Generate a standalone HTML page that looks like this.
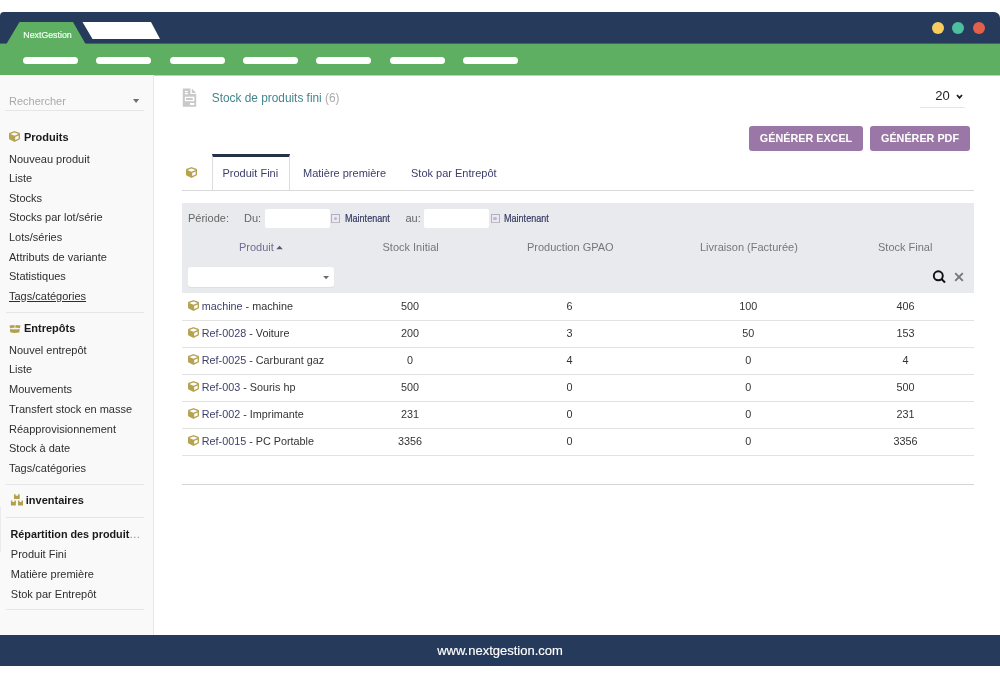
<!DOCTYPE html>
<html>
<head>
<meta charset="utf-8">
<style>
*{margin:0;padding:0;box-sizing:border-box}
html,body{width:1000px;height:679px;overflow:hidden;background:#fff}
body{font-family:"Liberation Sans",sans-serif;position:relative;color:#333}
.a{position:absolute;white-space:nowrap;line-height:1}
#nav{position:absolute;left:0;top:12px;width:1000px;height:31px;background:#263a5b;border-radius:4px 6px 0 0}
#green{position:absolute;left:0;top:43px;width:1000px;height:32px;background:#5eaf62}
.pill{position:absolute;top:57px;width:55px;height:7px;border-radius:3.5px;background:#fff}
.dot{position:absolute;top:22px;width:12px;height:12px;border-radius:50%}
#side{position:absolute;left:0;top:75px;width:154px;height:560px;background:#f9f9f9;border-right:1px solid #e8e8e8}
.si{position:absolute;font-size:11px;line-height:1;color:#2e2e2e;white-space:nowrap}
.sep{position:absolute;left:6px;width:138px;height:1px;background:#e6e6e6}
.hd{font-weight:bold;color:#1a1a1a}
#foot{position:absolute;left:0;top:635px;width:1000px;height:31px;background:#263a5b;color:#fff;-webkit-text-stroke:0.15px #fff;font-size:13px;text-align:center;line-height:31px}
.btn{position:absolute;top:126px;height:25px;background:#9b77a7;border-radius:3px;color:#fff;font-weight:bold;font-size:10.8px;text-align:center;line-height:25px}
.tab{position:absolute;font-size:11px;line-height:1;white-space:nowrap;color:#3c3e6a}
.th{position:absolute;font-size:11px;line-height:1;white-space:nowrap;color:#777}
.td{font-size:10.8px;color:#333}
.c{width:100px;text-align:center}
.hl{position:absolute;left:182px;width:792px;height:1px;background:#e2e2e2}
.inp{position:absolute;top:209px;height:19px;background:#fff;border-radius:2px}
.chk{position:absolute;top:214px;width:9px;height:9px;border:1px solid #aeb0c2;border-bottom-color:#bdbdc4;background:#ece8f3}
.chk:after{content:"";position:absolute;left:1.7px;top:1.7px;width:3.6px;height:3.6px;border-radius:50%;background:#cfadd0}
.mt{position:absolute;top:214px;font-size:10px;transform:scaleX(0.905);transform-origin:0 0;-webkit-text-stroke:0.2px #363a62;line-height:1;color:#363a62;white-space:nowrap}
</style>
</head>
<body>
<div id="wrap" style="position:absolute;left:0;top:0;width:1000px;height:679px;will-change:transform">
<div id="nav"></div>
<div id="green"></div>
<div style="position:absolute;left:0;top:43px;width:1000px;height:1px;background:#3d6a5e"></div>
<div style="position:absolute;left:0;top:75px;width:1000px;height:1px;background:#b0d8b1"></div>
<svg style="position:absolute;left:0;top:0" width="200" height="45">
  <polygon points="6.4,44 19.5,22 73,22 85.6,44" fill="#5eaf62"/>
  <polygon points="82.5,22 151,22 160,39 92.5,39" fill="#fff"/>
</svg>

<div class="a" style="left:23.3px;top:30.6px;font-size:8.8px;color:#effff0;-webkit-text-stroke:0.2px #effff0">NextGestion</div>
<div class="pill" style="left:23px"></div><div class="pill" style="left:96px"></div><div class="pill" style="left:170px"></div><div class="pill" style="left:243px"></div><div class="pill" style="left:316px"></div><div class="pill" style="left:390px"></div><div class="pill" style="left:463px"></div>
<div class="dot" style="left:932px;background:#f8cd5f"></div>
<div class="dot" style="left:952px;background:#4bbf9e"></div>
<div class="dot" style="left:973px;background:#e3604b"></div>

<div id="side"></div>
<div class="sep" style="top:110px;left:5px;width:139px"></div>
<svg width="7" height="5" style="position:absolute;left:133px;top:99px"><polygon points="0,0 6.2,0 3.1,4.1" fill="#6e6e6e"/></svg>
<svg width="11" height="11" viewBox="0 0 512 512" style="position:absolute;left:9px;top:131px"><path fill="#b5a352" d="M239.1 6.3l-208 78c-18.7 7-31.1 25-31.1 45v225.1c0 18.2 10.3 34.8 26.5 42.9l208 104c13.5 6.8 29.4 6.8 42.9 0l208-104c16.3-8.1 26.5-24.8 26.5-42.9V129.3c0-20-12.4-37.9-31.1-44.9l-208-78C262 2.2 250 2.2 239.1 6.3zM256 68.4l192 72v1.1l-192 78-192-78v-1.1l192-72zm32 356V275.5l160-65v133.9l-160 80z"/></svg>
<svg width="12" height="10" viewBox="0 0 12 10" style="position:absolute;left:9px;top:324px"><path fill="#b3a04e" d="M0.4 1.5 L5.3 0.9 L5.9 3.6 L1.2 4.2Z M6.1 3.6 L6.7 0.9 L11.6 1.5 L10.8 4.2Z M1.1 4.9 L5.6 5.5 L6 4.6 L6.4 5.5 L10.5 4.9 V8.2 Q6 9.6 1.1 8.2Z"/></svg>
<svg width="14" height="14" viewBox="0 0 14 14" style="position:absolute;left:10px;top:493px"><path fill="#b3a04e" d="M4 1.3h1.6v1.4h2.5v-1.4h1.6v4.6h-5.7Z M0.9 7.6h1.5v1.4h2v-1.4h1.5v5h-5Z M8 7.6h1.5v1.4h2v-1.4h1.5v5h-5Z"/></svg>
<div class="si " style="left:9px;top:96px;color:#a9a9a9">Rechercher</div><div class="si hd" style="left:24px;top:132px;">Produits</div><div class="si " style="left:9px;top:154px;">Nouveau produit</div><div class="si " style="left:9px;top:173px;">Liste</div><div class="si " style="left:9px;top:193px;">Stocks</div><div class="si " style="left:9px;top:212px;">Stocks par lot/série</div><div class="si " style="left:9px;top:232px;">Lots/séries</div><div class="si " style="left:9px;top:252px;">Attributs de variante</div><div class="si " style="left:9px;top:271px;">Statistiques</div><div class="si " style="left:9px;top:291px;"><u>Tags/catégories</u></div><div class="si hd" style="left:24px;top:323px;">Entrepôts</div><div class="si " style="left:9px;top:345px;">Nouvel entrepôt</div><div class="si " style="left:9px;top:364px;">Liste</div><div class="si " style="left:9px;top:384px;">Mouvements</div><div class="si " style="left:9px;top:404px;">Transfert stock en masse</div><div class="si " style="left:9px;top:424px;">Réapprovisionnement</div><div class="si " style="left:9px;top:443px;">Stock à date</div><div class="si " style="left:9px;top:463px;">Tags/catégories</div><div class="si hd" style="left:25.8px;top:495px;">inventaires</div><div class="si hd" style="left:10.5px;top:529px;font-size:10.8px">Répartition des produit<span style="font-weight:normal;color:#8a8a8a;font-size:11px">…</span></div><div class="si " style="left:10.8px;top:549px;">Produit Fini</div><div class="si " style="left:10.8px;top:569px;">Matière première</div><div class="si " style="left:10.8px;top:589px;">Stok par Entrepôt</div>
<div class="sep" style="top:312px"></div><div class="sep" style="top:484px"></div><div class="sep" style="top:517px"></div><div class="sep" style="top:609px"></div>
<div style="position:absolute;left:0;top:507px;width:1px;height:45px;background:#ebebeb"></div>

<!-- title -->
<svg width="15" height="19" viewBox="0 0 15 19" style="position:absolute;left:182px;top:88px">
 <path fill="#c9c9c9" d="M0.75 0.6H8.4V6.1H14.2V18.7H0.75Z"/>
 <path fill="#c9c9c9" d="M9.8 0.6L14.2 5H9.8Z"/>
 <rect x="2.9" y="2.9" width="3" height="1.3" fill="#fff"/>
 <rect x="2.9" y="5" width="3" height="1.3" fill="#fff"/>
 <rect x="2.9" y="8.7" width="9.4" height="4.5" fill="#fff"/>
 <rect x="4" y="10" width="6.8" height="2" fill="#c9c9c9"/>
 <rect x="8" y="15" width="4.3" height="2" fill="#fff"/>
</svg>
<div class="a" style="left:211.8px;top:93px;font-size:11.85px;color:#42868e">Stock de produits fini <span style="color:#aaa">(6)</span></div>
<div class="a" style="left:935.2px;top:89px;font-size:13px;color:#222">20</div>
<svg width="8" height="6" style="position:absolute;left:955.5px;top:93.5px"><polyline points="1,1 3.5,3.8 6,1" fill="none" stroke="#222" stroke-width="1.8"/></svg>
<div style="position:absolute;left:920px;top:107px;width:45px;height:1px;background:#e6e6e6"></div>

<div class="btn" style="left:749px;width:114px">GÉNÉRER EXCEL</div>
<div class="btn" style="left:870px;width:100px">GÉNÉRER PDF</div>

<!-- tabs -->
<svg width="11" height="11" viewBox="0 0 512 512" style="position:absolute;left:186px;top:166.5px"><path fill="#b5a352" d="M239.1 6.3l-208 78c-18.7 7-31.1 25-31.1 45v225.1c0 18.2 10.3 34.8 26.5 42.9l208 104c13.5 6.8 29.4 6.8 42.9 0l208-104c16.3-8.1 26.5-24.8 26.5-42.9V129.3c0-20-12.4-37.9-31.1-44.9l-208-78C262 2.2 250 2.2 239.1 6.3zM256 68.4l192 72v1.1l-192 78-192-78v-1.1l192-72zm32 356V275.5l160-65v133.9l-160 80z"/></svg>
<div style="position:absolute;left:212px;top:154px;width:78px;height:37px;border:1px solid #dcdcdc;border-top:3px solid #253146;border-bottom:none;background:#fff"></div>
<div style="position:absolute;left:182px;top:190px;width:792px;height:1px;background:#d9d9d9"></div>
<div class="tab" style="left:222.5px;top:168px">Produit Fini</div>
<div class="tab" style="left:303px;top:168px">Matière première</div>
<div class="tab" style="left:411px;top:168px">Stok par Entrepôt</div>

<!-- filter -->
<div style="position:absolute;left:182px;top:203px;width:792px;height:90px;background:#e9eaee"></div>
<div class="th" style="left:188px;top:213px;color:#666">Période:</div>
<div class="th" style="left:244px;top:213px;color:#666">Du:</div>
<div class="inp" style="left:265px;width:65px"></div>
<div class="chk" style="left:331px"></div>
<div class="mt" style="left:344.5px">Maintenant</div>
<div class="th" style="left:405.5px;top:213px;color:#666">au:</div>
<div class="inp" style="left:424px;width:65px"></div>
<div class="chk" style="left:490.5px"></div>
<div class="mt" style="left:503.5px">Maintenant</div>

<div class="th" style="left:239px;top:242px;color:#6c6e94">Produit</div>
<svg width="8" height="5" style="position:absolute;left:276px;top:244.5px"><polygon points="0.3,4.3 3.5,0.7 6.8,4.3" fill="#58596c"/></svg>
<div class="th" style="left:382.5px;top:242px">Stock Initial</div>
<div class="th" style="left:527px;top:242px">Production GPAO</div>
<div class="th" style="left:700px;top:242px">Livraison (Facturée)</div>
<div class="th" style="left:878px;top:242px">Stock Final</div>

<div style="position:absolute;left:188px;top:267px;width:146px;height:20px;background:#fff;border-radius:3px;box-shadow:0 1px 0 #dedee2"></div>
<svg width="7" height="4" style="position:absolute;left:323px;top:276px"><polygon points="0.2,0 6,0 3.1,3.3" fill="#6a6a6a"/></svg>
<svg width="14" height="14" style="position:absolute;left:932px;top:270px"><circle cx="6.3" cy="5.8" r="4.5" fill="none" stroke="#111" stroke-width="1.9"/><line x1="9.5" y1="9" x2="13" y2="12.5" stroke="#111" stroke-width="2"/></svg>
<svg width="10" height="10" style="position:absolute;left:954px;top:272px"><path d="M1.2 1.2L8.8 8.8M8.8 1.2L1.2 8.8" stroke="#777" stroke-width="1.9"/></svg>

<svg width="11" height="11" viewBox="0 0 512 512" style="position:absolute;left:188px;top:300px"><path fill="#b5a352" d="M239.1 6.3l-208 78c-18.7 7-31.1 25-31.1 45v225.1c0 18.2 10.3 34.8 26.5 42.9l208 104c13.5 6.8 29.4 6.8 42.9 0l208-104c16.3-8.1 26.5-24.8 26.5-42.9V129.3c0-20-12.4-37.9-31.1-44.9l-208-78C262 2.2 250 2.2 239.1 6.3zM256 68.4l192 72v1.1l-192 78-192-78v-1.1l192-72zm32 356V275.5l160-65v133.9l-160 80z"/></svg><div class="a td" style="left:201.8px;top:301px"><span style="color:#3e3f6a">machine</span> - machine</div><div class="a td c" style="left:360px;top:301px">500</div><div class="a td c" style="left:519.5px;top:301px">6</div><div class="a td c" style="left:698.3px;top:301px">100</div><div class="a td c" style="left:855.5px;top:301px">406</div><div class="hl" style="top:320px"></div><svg width="11" height="11" viewBox="0 0 512 512" style="position:absolute;left:188px;top:327px"><path fill="#b5a352" d="M239.1 6.3l-208 78c-18.7 7-31.1 25-31.1 45v225.1c0 18.2 10.3 34.8 26.5 42.9l208 104c13.5 6.8 29.4 6.8 42.9 0l208-104c16.3-8.1 26.5-24.8 26.5-42.9V129.3c0-20-12.4-37.9-31.1-44.9l-208-78C262 2.2 250 2.2 239.1 6.3zM256 68.4l192 72v1.1l-192 78-192-78v-1.1l192-72zm32 356V275.5l160-65v133.9l-160 80z"/></svg><div class="a td" style="left:201.8px;top:328px"><span style="color:#3e3f6a">Ref-0028</span> - Voiture</div><div class="a td c" style="left:360px;top:328px">200</div><div class="a td c" style="left:519.5px;top:328px">3</div><div class="a td c" style="left:698.3px;top:328px">50</div><div class="a td c" style="left:855.5px;top:328px">153</div><div class="hl" style="top:347px"></div><svg width="11" height="11" viewBox="0 0 512 512" style="position:absolute;left:188px;top:354px"><path fill="#b5a352" d="M239.1 6.3l-208 78c-18.7 7-31.1 25-31.1 45v225.1c0 18.2 10.3 34.8 26.5 42.9l208 104c13.5 6.8 29.4 6.8 42.9 0l208-104c16.3-8.1 26.5-24.8 26.5-42.9V129.3c0-20-12.4-37.9-31.1-44.9l-208-78C262 2.2 250 2.2 239.1 6.3zM256 68.4l192 72v1.1l-192 78-192-78v-1.1l192-72zm32 356V275.5l160-65v133.9l-160 80z"/></svg><div class="a td" style="left:201.8px;top:355px"><span style="color:#3e3f6a">Ref-0025</span> - Carburant gaz</div><div class="a td c" style="left:360px;top:355px">0</div><div class="a td c" style="left:519.5px;top:355px">4</div><div class="a td c" style="left:698.3px;top:355px">0</div><div class="a td c" style="left:855.5px;top:355px">4</div><div class="hl" style="top:374px"></div><svg width="11" height="11" viewBox="0 0 512 512" style="position:absolute;left:188px;top:381px"><path fill="#b5a352" d="M239.1 6.3l-208 78c-18.7 7-31.1 25-31.1 45v225.1c0 18.2 10.3 34.8 26.5 42.9l208 104c13.5 6.8 29.4 6.8 42.9 0l208-104c16.3-8.1 26.5-24.8 26.5-42.9V129.3c0-20-12.4-37.9-31.1-44.9l-208-78C262 2.2 250 2.2 239.1 6.3zM256 68.4l192 72v1.1l-192 78-192-78v-1.1l192-72zm32 356V275.5l160-65v133.9l-160 80z"/></svg><div class="a td" style="left:201.8px;top:382px"><span style="color:#3e3f6a">Ref-003</span> - Souris hp</div><div class="a td c" style="left:360px;top:382px">500</div><div class="a td c" style="left:519.5px;top:382px">0</div><div class="a td c" style="left:698.3px;top:382px">0</div><div class="a td c" style="left:855.5px;top:382px">500</div><div class="hl" style="top:401px"></div><svg width="11" height="11" viewBox="0 0 512 512" style="position:absolute;left:188px;top:408px"><path fill="#b5a352" d="M239.1 6.3l-208 78c-18.7 7-31.1 25-31.1 45v225.1c0 18.2 10.3 34.8 26.5 42.9l208 104c13.5 6.8 29.4 6.8 42.9 0l208-104c16.3-8.1 26.5-24.8 26.5-42.9V129.3c0-20-12.4-37.9-31.1-44.9l-208-78C262 2.2 250 2.2 239.1 6.3zM256 68.4l192 72v1.1l-192 78-192-78v-1.1l192-72zm32 356V275.5l160-65v133.9l-160 80z"/></svg><div class="a td" style="left:201.8px;top:409px"><span style="color:#3e3f6a">Ref-002</span> - Imprimante</div><div class="a td c" style="left:360px;top:409px">231</div><div class="a td c" style="left:519.5px;top:409px">0</div><div class="a td c" style="left:698.3px;top:409px">0</div><div class="a td c" style="left:855.5px;top:409px">231</div><div class="hl" style="top:428px"></div><svg width="11" height="11" viewBox="0 0 512 512" style="position:absolute;left:188px;top:435px"><path fill="#b5a352" d="M239.1 6.3l-208 78c-18.7 7-31.1 25-31.1 45v225.1c0 18.2 10.3 34.8 26.5 42.9l208 104c13.5 6.8 29.4 6.8 42.9 0l208-104c16.3-8.1 26.5-24.8 26.5-42.9V129.3c0-20-12.4-37.9-31.1-44.9l-208-78C262 2.2 250 2.2 239.1 6.3zM256 68.4l192 72v1.1l-192 78-192-78v-1.1l192-72zm32 356V275.5l160-65v133.9l-160 80z"/></svg><div class="a td" style="left:201.8px;top:436px"><span style="color:#3e3f6a">Ref-0015</span> - PC Portable</div><div class="a td c" style="left:360px;top:436px">3356</div><div class="a td c" style="left:519.5px;top:436px">0</div><div class="a td c" style="left:698.3px;top:436px">0</div><div class="a td c" style="left:855.5px;top:436px">3356</div><div class="hl" style="top:455px"></div>
<div style="position:absolute;left:182px;top:484px;width:792px;height:1px;background:#d4d4d4"></div>

<div id="foot">www.nextgestion.com</div>
</div>
</body>
</html>
